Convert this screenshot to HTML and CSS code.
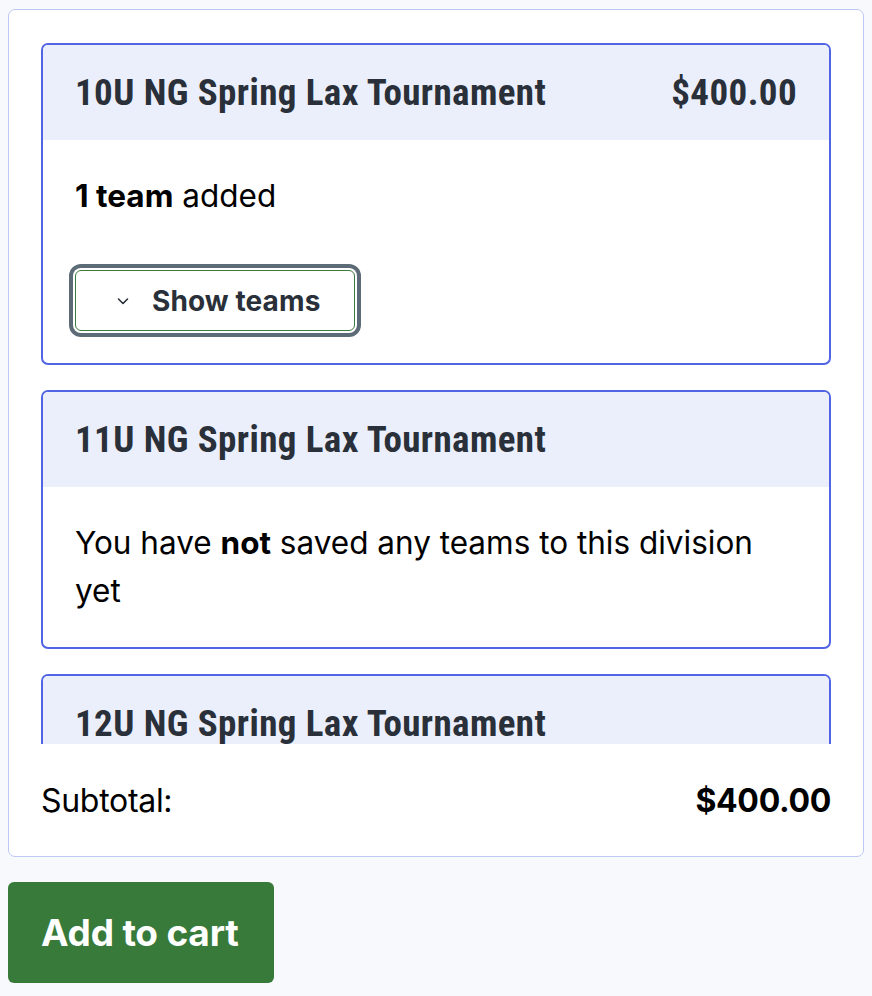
FILE: index.html
```html
<!DOCTYPE html>
<html lang="en">
<head>
<meta charset="utf-8">
<link rel="stylesheet" href="styles.css">
</head>
<body>
<div class="page">
  <section class="summary">
    <div class="scroller">
      <article class="division">
        <header class="division-head">
          <h3 class="division-title">10U NG Spring Lax Tournament</h3>
          <span class="division-price">$400.00</span>
        </header>
        <div class="division-body">
          <p class="division-text"><strong>1 team</strong> added</p>
          <button class="toggle" type="button">
            <svg class="chev" viewBox="0 0 14 14" width="14" height="14"><path d="M2.5 5 L7 9.5 L11.5 5" fill="none" stroke="#2a3039" stroke-width="1.6" stroke-linecap="round" stroke-linejoin="round"/></svg>
            <span>Show teams</span>
          </button>
        </div>
      </article>
      <article class="division">
        <header class="division-head">
          <h3 class="division-title">11U NG Spring Lax Tournament</h3>
        </header>
        <div class="division-body">
          <p class="division-text">You have <strong>not</strong> saved any teams to this division yet</p>
        </div>
      </article>
      <article class="division">
        <header class="division-head">
          <h3 class="division-title">12U NG Spring Lax Tournament</h3>
        </header>
      </article>
    </div>
    <div class="subtotal">
      <span>Subtotal:</span>
      <strong>$400.00</strong>
    </div>
  </section>
  <button class="cart" type="button">Add to cart</button>
</div>
</body>
</html>
```

FILE: styles.css
```css
html, body {
  margin: 0;
  padding: 0;
  background: #f8f9fc;
}
body {
  font-family: "Inter", "Roboto", sans-serif;
  color: #000;
}
.page {
  padding: 9px 8px 0 8px;
}
.summary {
  background: #fff;
  border: 1.5px solid #bfc8f4;
  border-radius: 7px;
  padding: 33px 32px 0 32px;
}
.scroller {
  height: 701px;
  overflow: hidden;
  display: flex;
  flex-direction: column;
  gap: 25px;
}
.division {
  flex: none;
  border: 2px solid #5165e4;
  border-radius: 7px;
  overflow: hidden;
}
.division:last-child {
  height: 120px;
}
.division-head {
  background: #ebeffb;
  height: 95px;
  display: flex;
  align-items: center;
  justify-content: space-between;
  padding: 0 32px;
}
.division-title, .division-price {
  margin: 0;
  font-family: "Liberation Sans Narrow", "Roboto Condensed", "Roboto", sans-serif;
  font-weight: 700;
  font-size: 37px;
  letter-spacing: 0.4px;
  color: #2a3039;
}
.division-body {
  padding: 32px;
}
.division-text {
  margin: 0;
  font-size: 31.5px;
  line-height: 48px;
}
.division-text strong { font-weight: 700; }
.toggle {
  margin-top: 50px;
  display: flex;
  align-items: center;
  gap: 22px;
  width: 280px;
  height: 61px;
  padding: 0 0 0 40px;
  background: #fff;
  border: 1.5px solid #3b7b3d;
  border-radius: 6px;
  box-shadow: 0 0 0 2px #fff, 0 0 0 6px #5c6b76;
  font-family: "Inter", "Roboto", sans-serif;
  font-weight: 700;
  font-size: 28px;
  letter-spacing: 0.1px;
  color: #2a3039;
  box-sizing: border-box;
}
.subtotal {
  display: flex;
  justify-content: space-between;
  align-items: center;
  height: 112px;
  font-size: 32px;
  letter-spacing: -0.3px;
}
.subtotal strong { font-weight: 700; }
.cart {
  margin-top: 25px;
  width: 266px;
  height: 101px;
  background: #387a3a;
  color: #fff;
  border: none;
  border-radius: 6px;
  font-family: "Inter", "Roboto", sans-serif;
  font-weight: 700;
  font-size: 37px;
  letter-spacing: -0.2px;
  text-align: left;
  padding: 0 0 0 33px;
}
```
